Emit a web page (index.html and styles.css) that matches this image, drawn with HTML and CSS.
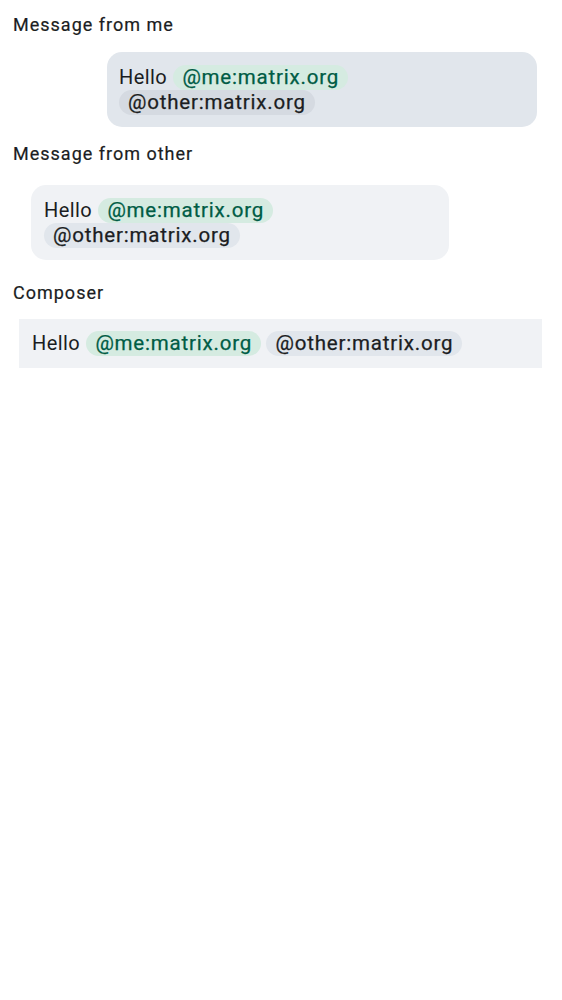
FILE: index.html
```html
<!DOCTYPE html>
<html>
<head>
<meta charset="utf-8">
<link rel="stylesheet" href="styles.css">
</head>
<body>
<div class="page">
  <div class="label label-first">Message from me</div>
  <div class="row">
    <div class="bubble bubble-me">Hello <span class="pill pill-me">@me:matrix.org</span> <span class="pill pill-other">@other:matrix.org</span></div>
  </div>
  <div class="label">Message from other</div>
  <div class="row">
    <div class="bubble bubble-other">Hello <span class="pill pill-me">@me:matrix.org</span> <span class="pill pill-other">@other:matrix.org</span></div>
  </div>
  <div class="label label-composer">Composer</div>
  <div class="composer">Hello <span class="pill pill-me">@me:matrix.org</span> <span class="pill pill-other">@other:matrix.org</span></div>
</div>
</body>
</html>
```

FILE: styles.css
```css
html, body {
  margin: 0;
  padding: 0;
  background: #ffffff;
}
.page {
  font-family: Roboto, "Liberation Sans", sans-serif;
  color: #1b1d22;
  padding: 13px 13px 0 13px;
  display: flex;
  flex-direction: column;
}
.label {
  font-size: 18px;
  font-weight: 400;
  line-height: 24px;
  letter-spacing: 1px;
  color: #1b1d22;
  -webkit-text-stroke: 0.2px #1b1d22;
}
.label-composer {
  margin-top: 2px;
}
.row {
  display: flex;
}
.bubble {
  font-size: 20px;
  line-height: 25px;
  letter-spacing: 0.4px;
  border-radius: 15px;
  box-sizing: border-box;
  padding: 13px 12px 12px 12px;
}
.bubble-me {
  margin: 15px 12px 15px auto;
  width: 430px;
  background: #e1e6ec;
}
.bubble-other {
  margin: 19px 0 19px 18px;
  width: 418px;
  padding-left: 13px;
  background: #f0f2f5;
}
.composer {
  margin: 14px 7px 0 6px;
  font-size: 20px;
  line-height: 25px;
  letter-spacing: 0.4px;
  background: #f0f2f5;
  padding: 12px 13px 12px 13px;
}
.pill {
  display: inline-block;
  padding: 0 9px 0 9px;
  border-radius: 13px;
  line-height: 25px;
  font-size: 20.5px;
  font-weight: 400;
  letter-spacing: 0.8px;
  -webkit-text-stroke: 0.25px currentColor;
}
.pill-me {
  background: #d5ebe1;
  color: #005c45;
  margin-left: 1px;
}
.pill-other {
  background: #e1e6ec;
  color: #1b1d22;
}
.bubble-me .pill-other {
  background: #d5dae1;
}
```
